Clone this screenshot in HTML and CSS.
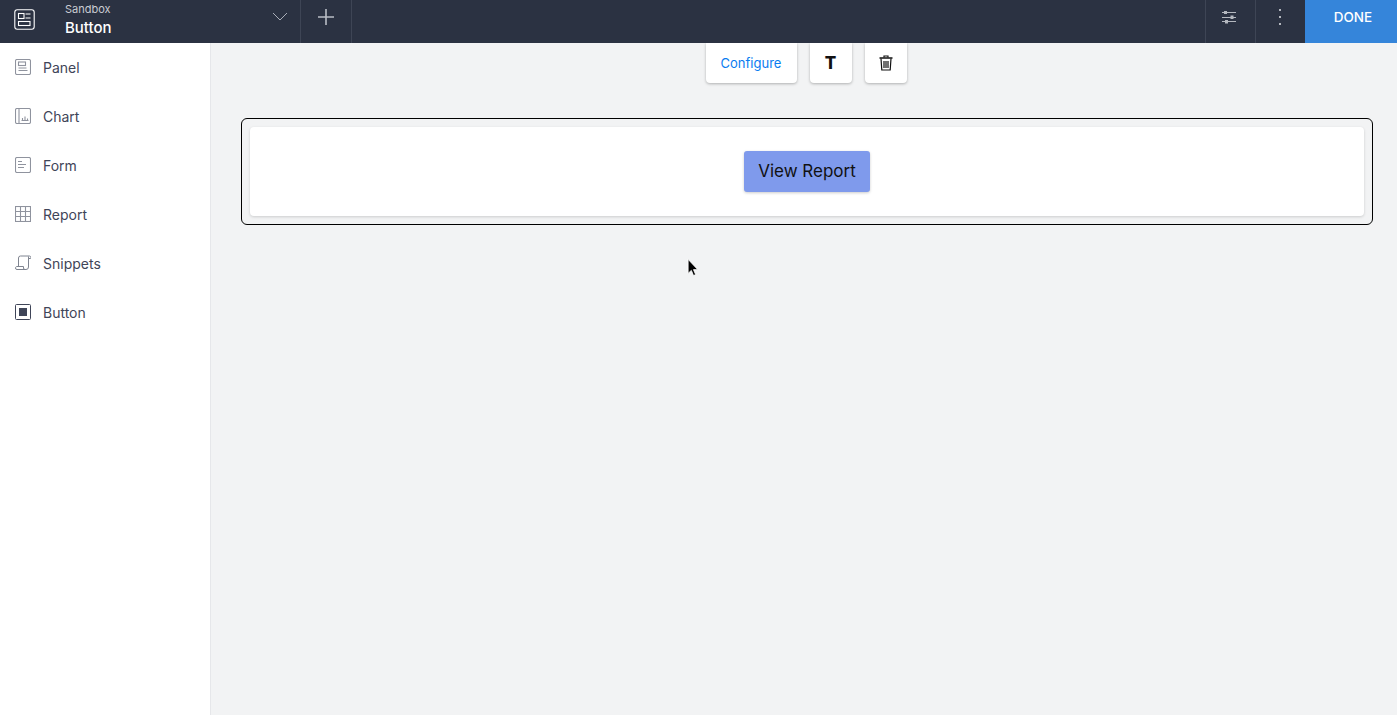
FILE: index.html
```html
<!DOCTYPE html>
<html lang="en">
<head>
<meta charset="utf-8">
<title>Sandbox - Button</title>
<link rel="stylesheet" href="styles.css">
</head>
<body>
<header class="topbar">
  <div class="brand">
    <svg class="brand-icon" width="21" height="21" viewBox="0 0 21 21" fill="none" stroke="#fff" stroke-width="1.100"><rect x=".8" y=".8" width="19.400" height="19.400" rx="2.500"/><rect x="4.500" y="4.500" width="5.500" height="5"/><path d="M11.500 5h5M11.500 9h5"/><rect x="4.500" y="12.500" width="11.500" height="4"/></svg>
    <div class="titles">
      <span class="title-small">Sandbox</span>
      <span class="title-main">Button</span>
    </div>
    <svg class="chevron" width="16" height="9" viewBox="0 0 16 9" fill="none" stroke="#a9aeb8" stroke-width="1"><path d="M1 1l7 7 7-7"/></svg>
  </div>
  <div class="bar-cell add">
    <svg width="18" height="18" viewBox="0 0 18 18" stroke="#b9bdc5" stroke-width="1.600"><path d="M9 1v16M1 9h16"/></svg>
  </div>
  <div class="bar-spacer"></div>
  <div class="bar-cell tool">
    <svg width="16" height="14" viewBox="0 0 16 14" stroke="#b4b8bf" fill="#b4b8bf"><path d="M1 2.500h14M1 7.500h14M1 11.500h14" stroke-width="1"/><rect x="3" y="1" width="3" height="3" stroke="none"/><rect x="9.500" y="5.500" width="3" height="3.500" stroke="none"/><rect x="4" y="10" width="3" height="3.500" stroke="none"/></svg>
  </div>
  <div class="bar-cell more">
    <span class="dot"></span><span class="dot"></span><span class="dot"></span>
  </div>
  <button class="done">DONE</button>
</header>
<div class="workspace">
  <aside class="sidebar">
    <div class="side-item">
      <svg class="side-icon" viewBox="0 0 16 16" fill="none" stroke="#8f939e" stroke-width="1.100"><rect x=".5" y=".5" width="15" height="15" rx="1.500"/><rect x="3.500" y="3" width="7" height="3.500"/><path d="M3.500 9h8M3.500 11.500h9"/></svg>
      <span>Panel</span>
    </div>
    <div class="side-item">
      <svg class="side-icon" viewBox="0 0 16 16" fill="none" stroke="#8f939e" stroke-width="1.100"><rect x=".5" y=".5" width="15" height="15" rx="1.500"/><path d="M4 1v14M7.500 12.500v-2.500M10 12.500v-4M12.500 12.500v-2M6.500 12.500h7"/></svg>
      <span>Chart</span>
    </div>
    <div class="side-item">
      <svg class="side-icon" viewBox="0 0 16 16" fill="none" stroke="#8f939e" stroke-width="1.100"><rect x=".5" y=".5" width="15" height="15" rx="1.500"/><path d="M3 4.500h4M3 7.500h8M3 10.500h6"/></svg>
      <span>Form</span>
    </div>
    <div class="side-item">
      <svg class="side-icon" viewBox="0 0 16 16" fill="none" stroke="#8f939e" stroke-width="1.100"><rect x=".5" y=".5" width="15" height="15"/><path d="M5.500 1v14M10.500 1v14M1 5.500h14M1 10.500h14"/></svg>
      <span>Report</span>
    </div>
    <div class="side-item">
      <svg class="side-icon" viewBox="0 0 16 16" fill="none" stroke="#7f8490"><path d="M3.500 11.500V3a2 2 0 0 1 2-2h9a1.500 1.500 0 0 1 1 2.500h-2.500M13.500 1.500V12a2.500 2.500 0 0 1-2.500 2.500H2a1.500 1.500 0 0 1-1.500-1.500c0-1 .7-1.500 1.500-1.500h6.500V13a1.500 1.500 0 0 0 1.500 1.500"/></svg>
      <span>Snippets</span>
    </div>
    <div class="side-item">
      <svg class="side-icon" viewBox="0 0 16 16" fill="#3f4558" stroke="#3f4558"><rect x=".5" y=".5" width="15" height="15" rx="1" fill="none"/><rect x="4" y="4" width="8" height="8" stroke="none"/></svg>
      <span>Button</span>
    </div>
  </aside>
  <main class="canvas">
    <div class="toolbar">
      <button class="tool-btn configure">Configure</button>
      <button class="tool-btn square text-t">T</button>
      <button class="tool-btn square">
        <svg width="14" height="16" viewBox="0 0 14 16" fill="none" stroke="#111" stroke-width="1.200"><path d="M.5 3h13" stroke-width="1.500"/><path d="M5 2.500V1h4v1.500"/><path d="M2 3.500l.8 11.500h8.400L12 3.500"/><path d="M5 6v7M7 6v7M9 6v7"/></svg>
      </button>
    </div>
    <div class="frame">
      <div class="card">
        <button class="report-btn">View Report</button>
      </div>
    </div>
  </main>
</div>
<svg class="cursor" width="13" height="20" viewBox="0 0 12 18"><path d="M1 1v13l3-2.800 2 4.800 2-.9-2-4.600h4z" fill="#000" stroke="#fff" stroke-width=".8"/></svg>
</body>
</html>
```
FILE: styles.css
```css
* { box-sizing: border-box; }
html, body { height: 100%; }
body {
  margin: 0;
  display: flex;
  flex-direction: column;
  overflow: hidden;
  background: #f2f3f4;
  font-family: "Inter", "Liberation Sans", sans-serif;
  color: #3f4558;
}
button { font-family: inherit; border: 0; cursor: pointer; }

.topbar {
  flex: 0 0 43px;
  display: flex;
  align-items: stretch;
  background: #2b3242;
  color: #fff;
}
.brand {
  width: 301px;
  display: flex;
  align-items: center;
  padding-left: 14px;
  border-right: 1px solid #3e4555;
}
.brand-icon { flex: none; margin-top: -5px; }
.titles {
  display: flex;
  flex-direction: column;
  margin-left: 30px;
  flex: 1;
}
.title-small { font-size: 11px; line-height: 13px; color: #c9ccd2; margin-top: -3px; }
.title-main { font-size: 15px; line-height: 19px; margin-top: 2px; font-weight: 500; }
.chevron { margin: -10px 12px 0 0; }
.bar-cell {
  display: flex;
  align-items: center;
  justify-content: center;
  padding-bottom: 9px;
}
.add { width: 51px; border-right: 1px solid #3e4555; }
.bar-spacer { flex: 1; }
.tool { width: 50px; border-left: 1px solid #3e4555; padding-right: 3px; }
.more {
  width: 50px;
  flex-direction: column;
  gap: 5px;
  border-left: 1px solid #3e4555;
  padding-right: 2px;
}
.dot { width: 2px; height: 2px; background: #b4b8bf; }
.done {
  width: 92px;
  background: #3585da;
  color: #fff;
  font-size: 13.500px;
  font-weight: 500;
  padding: 0 0 10px 4px;
}

.workspace { flex: 1; display: flex; min-height: 0; }
.sidebar {
  width: 211px;
  flex: none;
  background: #fff;
  border-right: 1px solid #e6e7ea;
}
.side-item {
  height: 49px;
  display: flex;
  align-items: center;
  gap: 12px;
  padding-left: 15px;
  font-size: 14px;
}
.side-icon { width: 16px; height: 16px; flex: none; margin-top: -1px; }

.canvas {
  flex: 1;
  padding: 0 24px 0 30px;
  min-width: 0;
}
.toolbar {
  height: 40px;
  display: flex;
  justify-content: center;
  gap: 13px;
  margin-right: 2px;
}
.tool-btn {
  height: 40px;
  background: #fff;
  border-radius: 0 0 4px 4px;
  box-shadow: 0 1px 3px rgba(0, 0, 0, .28);
  clip-path: inset(0 -6px -6px -6px);
  display: flex;
  align-items: center;
  justify-content: center;
  padding: 0;
}
.configure { width: 91px; color: #0a7cf0; font-size: 13px; }
.square { width: 42px; }
.text-t { font-size: 17px; font-weight: 800; color: #111; }
.frame {
  margin-top: 35px;
  height: 107px;
  border: 1px solid #000;
  border-radius: 6px;
  padding: 8px;
}
.card {
  height: 89px;
  background: #fff;
  border-radius: 4px;
  box-shadow: 0 1px 3px rgba(0, 0, 0, .16);
  display: flex;
  align-items: center;
  justify-content: center;
}
.report-btn {
  width: 126px;
  height: 41px;
  margin-top: -1px;
  background: #7f9aec;
  color: #111;
  border-radius: 3px;
  font-size: 17px;
  box-shadow: 0 1px 3px rgba(0, 0, 0, .2);
  padding: 0;
}
.cursor { position: absolute; left: 687px; top: 258px; }
```
